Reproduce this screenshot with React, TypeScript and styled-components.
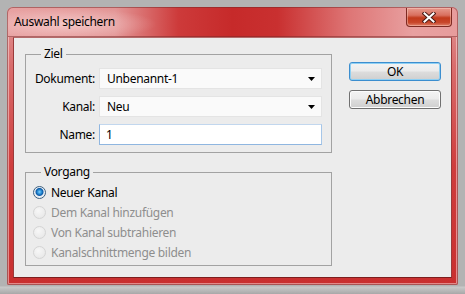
import styled, { createGlobalStyle } from "styled-components";

const Global = createGlobalStyle`
  html, body { margin: 0; padding: 0; }
  body {
    width: 465px;
    height: 294px;
    overflow: hidden;
    background: linear-gradient(to bottom, #b3b3b3 0, #b3b3b3 286px, #c9c9c9 287px, #a8a8a8 294px);
    font-family: "Noto Sans", "Open Sans", sans-serif;
    font-size: 12px;
    letter-spacing: -0.3px;
  }
`;

const Window = styled.div`
  margin: 7px 0 0 7px;
  width: 451px;
  height: 278px;
  box-sizing: border-box;
  padding: 0 6px 7px 6px;
  display: flex;
  flex-direction: column;
  border-radius: 6px 6px 2px 2px;
  background: linear-gradient(to bottom, #e29a9a 0, #d96c6c 60px, #cf3d3d 160px, #c92f2f 100%);
  box-shadow: inset 0 0 0 1px rgba(120, 40, 40, 0.55), inset 0 0 0 2px rgba(255, 230, 230, 0.5);
`;

const TitleBar = styled.div`
  height: 30px;
  margin: 0 -6px;
  padding: 0 6px 0 7px;
  display: flex;
  justify-content: space-between;
  align-items: flex-start;
  border-radius: 6px 6px 0 0;
  background:
    radial-gradient(ellipse 90px 16px at 60px 17px, rgba(255, 235, 235, 0.55), rgba(255, 235, 235, 0) 100%),
    linear-gradient(to right, #e8a2a2 0%, #e39696 24%, #cd3a3a 38%, #c62a2a 50%, #c93030 60%, #de7676 76%, #e8a0a0 90%, #e79c9c 100%);
  box-shadow: inset 0 0 0 1px rgba(120, 40, 40, 0.5);
`;

const Title = styled.span`
  line-height: 30px;
  color: #000;
`;

const CloseButton = styled.div`
  width: 46px;
  height: 19px;
  margin-top: 1px;
  box-sizing: border-box;
  border: 1px solid #7d2a22;
  border-top: none;
  border-radius: 0 0 4px 4px;
  display: flex;
  align-items: center;
  justify-content: center;
  background: linear-gradient(to bottom, #e79a8e 0%, #d9705f 40%, #c23a1c 55%, #c8462a 80%, #e0806a 100%);
  box-shadow: inset 0 0 0 1px rgba(255, 210, 200, 0.45);
`;

const Client = styled.div`
  flex: 1;
  display: flex;
  gap: 17px;
  padding: 8px 10px 0 11px;
  background: #ececec;
  border: 1px solid;
  border-color: #b46a6a #9a3a3a #7c1e1e #9a3a3a;
`;

const LeftColumn = styled.div`
  width: 307px;
  display: flex;
  flex-direction: column;
  gap: 11px;
`;

const Group = styled.fieldset`
  margin: 0;
  padding: 0;
  min-width: 0;
  border: 1px solid #a2a2a2;
`;

const Legend = styled.legend`
  margin-left: 15px;
  padding: 0 3px;
  line-height: 16px;
  color: #000;
`;

const FieldGrid = styled.div`
  padding: 6px 8px 7px 8px;
  display: grid;
  grid-template-columns: 61px 223px;
  grid-auto-rows: 21px;
  column-gap: 4px;
  row-gap: 7px;
`;

const Label = styled.label`
  align-self: center;
  text-align: right;
  white-space: nowrap;
  color: #000;
`;

const Dropdown = styled.div`
  box-sizing: border-box;
  display: flex;
  align-items: center;
  justify-content: space-between;
  padding: 0 6px 0 7px;
  background: #fafafa;
  border: 1px solid #e4e4e4;
  color: #000;
`;

const TextField = styled.input`
  box-sizing: border-box;
  width: 100%;
  height: 21px;
  margin: 0;
  padding: 0 6px;
  font: inherit;
  letter-spacing: inherit;
  color: #000;
  background: #fff;
  border: 1px solid;
  border-color: #c2d7ee #a6c6e8 #8fb6e0 #8fb6e0;
  outline: none;
`;

const RadioList = styled.div`
  padding: 2px 7px 3px 7px;
  display: grid;
  grid-auto-rows: 20px;
`;

const RadioRow = styled.div<{ $disabled?: boolean }>`
  display: flex;
  align-items: center;
  gap: 5px;
  color: ${(p) => (p.$disabled ? "#8e8e8e" : "#000")};
`;

const RadioMark = styled.span<{ $checked?: boolean; $disabled?: boolean }>`
  width: 13px;
  height: 13px;
  box-sizing: border-box;
  border-radius: 50%;
  flex-shrink: 0;
  border: 1px solid ${(p) => (p.$disabled ? "#d4d4d4" : "#3d5f7f")};
  background: ${(p) =>
    p.$checked
      ? "radial-gradient(circle at 50% 45%, #7fd0ff 0, #2a8fd6 2px, #0d5aa8 3.5px, #e8eef3 4.5px, #f6f6f6 100%)"
      : p.$disabled
      ? "radial-gradient(circle at 40% 35%, #f7f7f7 0, #e4e4e4 100%)"
      : "#fff"};
`;

const ButtonColumn = styled.div`
  width: 92px;
  padding-top: 16px;
  display: flex;
  flex-direction: column;
  gap: 9px;
`;

const Button = styled.button<{ $default?: boolean }>`
  height: 19px;
  margin: 0;
  padding: 0;
  font: inherit;
  letter-spacing: inherit;
  color: #000;
  border-radius: 3px;
  border: 1px solid ${(p) => (p.$default ? "#3c8ecf" : "#707070")};
  background: linear-gradient(to bottom, #f3f3f3 0%, #ebebeb 48%, #dddddd 52%, #cfcfcf 100%);
  box-shadow: inset 0 0 0 1px ${(p) => (p.$default ? "#8ed0f4" : "#fcfcfc")};
  line-height: 16px;
`;

const Arrow = () => (
  <svg width="7" height="4" viewBox="0 0 7 4">
    <path d="M0 0H7L3.5 4Z" fill="#000" />
  </svg>
);

const CloseGlyph = () => (
  <svg width="14" height="11" viewBox="0 0 14 11">
    <path d="M2.5 1.5L11.5 9.5M11.5 1.5L2.5 9.5" stroke="#4a1b16" strokeWidth="4" strokeLinecap="square" />
    <path d="M2.5 1.5L11.5 9.5M11.5 1.5L2.5 9.5" stroke="#fff" strokeWidth="2" strokeLinecap="square" />
  </svg>
);

const options = [
  { label: "Neuer Kanal", checked: true },
  { label: "Dem Kanal hinzufügen", disabled: true },
  { label: "Von Kanal subtrahieren", disabled: true },
  { label: "Kanalschnittmenge bilden", disabled: true },
];

const App = () => {
  return (
    <>
      <Global />
      <Window>
        <TitleBar>
          <Title>Auswahl speichern</Title>
          <CloseButton>
            <CloseGlyph />
          </CloseButton>
        </TitleBar>
        <Client>
          <LeftColumn>
            <Group>
              <Legend>Ziel</Legend>
              <FieldGrid>
                <Label>Dokument:</Label>
                <Dropdown>
                  <span>Unbenannt-1</span>
                  <Arrow />
                </Dropdown>
                <Label>Kanal:</Label>
                <Dropdown>
                  <span>Neu</span>
                  <Arrow />
                </Dropdown>
                <Label>Name:</Label>
                <TextField value="1" readOnly />
              </FieldGrid>
            </Group>
            <Group>
              <Legend>Vorgang</Legend>
              <RadioList>
                {options.map((o) => (
                  <RadioRow key={o.label} $disabled={o.disabled}>
                    <RadioMark $checked={o.checked} $disabled={o.disabled} />
                    {o.label}
                  </RadioRow>
                ))}
              </RadioList>
            </Group>
          </LeftColumn>
          <ButtonColumn>
            <Button $default>OK</Button>
            <Button>Abbrechen</Button>
          </ButtonColumn>
        </Client>
      </Window>
    </>
  );
};

export default App;
